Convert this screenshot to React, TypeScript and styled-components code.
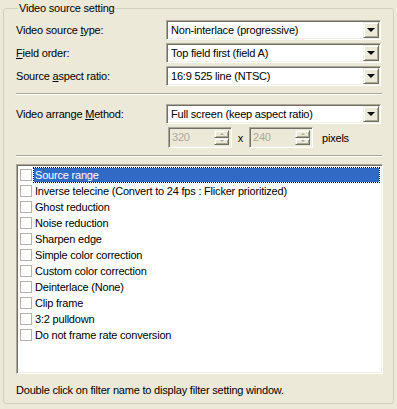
import React from "react";
import styled, { createGlobalStyle } from "styled-components";

const Global = createGlobalStyle`
  html, body { margin: 0; padding: 0; background: #ECE9D8; }
  body { font-family: "Liberation Sans", Arial, sans-serif; font-size: 11px; color: #000; letter-spacing: -0.2px; }
  #root { width: 397px; height: 409px; overflow: hidden; }
`;

const Page = styled.div`
  width: 397px;
  height: 409px;
  box-sizing: border-box;
  padding: 2px 0 0 3px;
  background: #ECE9D8;
`;

const Group = styled.fieldset`
  box-sizing: border-box;
  width: 391px;
  height: 402px;
  margin: 0;
  padding: 5px 12px 0 12px;
  border: 1px solid #D0D0BF;
  border-radius: 3px;
  min-inline-size: 0;
  display: flex;
  flex-direction: column;
`;

const Legend = styled.legend`
  padding: 0 1px;
  margin-left: 2px;
  line-height: 13px;
  font-size: 11px;
  color: #000;
`;

const FormGrid = styled.div`
  display: grid;
  grid-template-columns: 150px 215px;
  row-gap: 3px;
  align-items: center;
`;

const Label = styled.span`
  line-height: 13px;
  white-space: nowrap;
`;

const Combo = styled.div`
  box-sizing: border-box;
  height: 20px;
  display: flex;
  align-items: center;
  background: #fff;
  border: 1px solid;
  border-color: #ACA899 #fff #fff #ACA899;
  box-shadow: inset 1px 1px 0 #716F64, inset -1px -1px 0 #F1EFE2;
  padding: 1px;
`;

const ComboText = styled.span`
  flex: 1;
  padding-left: 3px;
  white-space: nowrap;
  overflow: hidden;
  line-height: 13px;
`;

const DropButton = styled.div`
  box-sizing: border-box;
  width: 16px;
  height: 16px;
  background: #ECE9D8;
  border: 1px solid;
  border-color: #F1EFE2 #716F64 #716F64 #F1EFE2;
  box-shadow: inset 1px 1px 0 #fff, inset -1px -1px 0 #ACA899;
  display: flex;
  align-items: center;
  justify-content: center;
`;

const Arrow = styled.span<{ $size: number; $color?: string; $up?: boolean }>`
  width: 0;
  height: 0;
  border-left: ${(p) => p.$size}px solid transparent;
  border-right: ${(p) => p.$size}px solid transparent;
  ${(p) =>
    p.$up
      ? `border-bottom: ${p.$size}px solid ${p.$color || "#000"};`
      : `border-top: ${p.$size}px solid ${p.$color || "#000"};`}
`;

const Separator = styled.div<{ $top: number; $bottom: number }>`
  height: 0;
  border-top: 1px solid #ACA899;
  border-bottom: 1px solid #fff;
  margin: ${(p) => p.$top}px 0 ${(p) => p.$bottom}px 0;
  width: 366px;
`;

const SpinRow = styled.div`
  display: flex;
  align-items: center;
  margin-left: 2px;
  height: 21px;
`;

const Spin = styled.div`
  box-sizing: border-box;
  width: 64px;
  height: 21px;
  display: flex;
  background: #ECE9D8;
  border: 1px solid;
  border-color: #ACA899 #fff #fff #ACA899;
  box-shadow: inset 1px 1px 0 #716F64, inset -1px -1px 0 #F1EFE2;
  padding: 2px;
`;

const SpinText = styled.span`
  flex: 1;
  color: #ACA899;
  line-height: 15px;
  padding-left: 1px;
`;

const SpinButtons = styled.div`
  width: 15px;
  display: flex;
  flex-direction: column;
`;

const SpinHalf = styled.div`
  flex: 1;
  box-sizing: border-box;
  background: #ECE9D8;
  border: 1px solid;
  border-color: #F1EFE2 #716F64 #716F64 #F1EFE2;
  box-shadow: inset 1px 1px 0 #fff, inset -1px -1px 0 #ACA899;
  display: flex;
  align-items: center;
  justify-content: center;
`;

const Times = styled.span`
  width: 17px;
  text-align: center;
`;

const Unit = styled.span`
  margin-left: 9px;
`;

const ListBox = styled.div`
  box-sizing: border-box;
  width: 367px;
  height: 210px;
  background: #fff;
  border: 1px solid;
  border-color: #ACA899 #fff #fff #ACA899;
  box-shadow: inset 1px 1px 0 #716F64, inset -1px -1px 0 #F1EFE2;
  padding: 2px;
  display: flex;
  flex-direction: column;
`;

const Item = styled.div`
  height: 16px;
  display: flex;
  align-items: center;
`;

const Check = styled.span`
  box-sizing: border-box;
  width: 12px;
  height: 12px;
  margin: 0 1px 0 1px;
  border: 1px solid #B2B2A6;
  background: #fff;
  flex: none;
`;

const ItemText = styled.span<{ $selected?: boolean }>`
  box-sizing: border-box;
  height: 16px;
  line-height: 14px;
  padding: 0 1px;
  white-space: nowrap;
  ${(p) =>
    p.$selected
      ? `flex: 1; background: #CE953A; border: 1px dotted #000; color: #fff;
         background-image: linear-gradient(#316AC5, #316AC5);
         background-clip: padding-box, border-box;
         background-origin: padding-box;`
      : `border: 1px solid transparent;`}
`;

const Footer = styled.div`
  margin-top: 10px;
  line-height: 13px;
`;

const filters = [
  "Source range",
  "Inverse telecine (Convert to 24 fps : Flicker prioritized)",
  "Ghost reduction",
  "Noise reduction",
  "Sharpen edge",
  "Simple color correction",
  "Custom color correction",
  "Deinterlace (None)",
  "Clip frame",
  "3:2 pulldown",
  "Do not frame rate conversion",
];

function ComboBox({ value }: { value: string }) {
  return (
    <Combo>
      <ComboText>{value}</ComboText>
      <DropButton>
        <Arrow $size={4} />
      </DropButton>
    </Combo>
  );
}

function SpinBox({ value }: { value: string }) {
  return (
    <Spin>
      <SpinText>{value}</SpinText>
      <SpinButtons>
        <SpinHalf>
          <Arrow $size={2} $up $color="#ACA899" />
        </SpinHalf>
        <SpinHalf>
          <Arrow $size={2} $color="#ACA899" />
        </SpinHalf>
      </SpinButtons>
    </Spin>
  );
}

export default function App() {
  return (
    <>
      <Global />
      <Page>
        <Group>
          <Legend>Video source setting</Legend>
          <FormGrid>
            <Label>
              Video source <u>t</u>ype:
            </Label>
            <ComboBox value="Non-interlace (progressive)" />
            <Label>
              <u>F</u>ield order:
            </Label>
            <ComboBox value="Top field first (field A)" />
            <Label>
              Source <u>a</u>spect ratio:
            </Label>
            <ComboBox value="16:9 525 line (NTSC)" />
          </FormGrid>
          <Separator $top={7} $bottom={9} />
          <FormGrid>
            <Label>
              Video arrange <u>M</u>ethod:
            </Label>
            <ComboBox value="Full screen (keep aspect ratio)" />
            <span />
            <SpinRow>
              <SpinBox value="320" />
              <Times>x</Times>
              <SpinBox value="240" />
              <Unit>pixels</Unit>
            </SpinRow>
          </FormGrid>
          <Separator $top={7} $bottom={7} />
          <ListBox>
            {filters.map((f, i) => (
              <Item key={f}>
                <Check />
                <ItemText $selected={i === 0}>{f}</ItemText>
              </Item>
            ))}
          </ListBox>
          <Footer>Double click on filter name to display filter setting window.</Footer>
        </Group>
      </Page>
    </>
  );
}
